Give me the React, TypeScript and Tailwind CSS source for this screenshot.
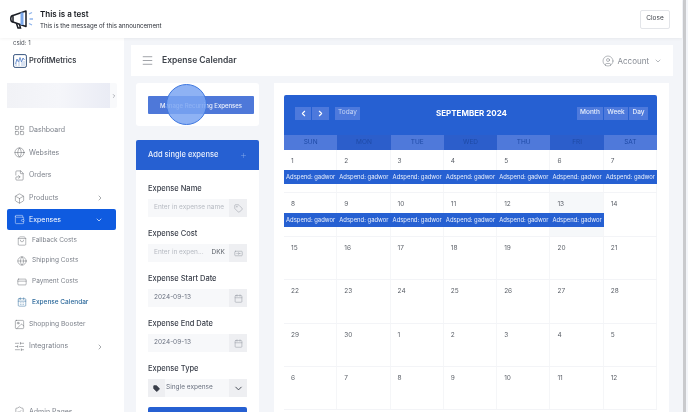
import {
  Box,
  CalendarDays,
  ChevronDown,
  ChevronLeft,
  ChevronRight,
  CircleUser,
  CreditCard,
  FileSymlink,
  Globe,
  Banknote,
  Image,
  LayoutGrid,
  Menu,
  Plus,
  ShieldCheck,
  ShoppingBag,
  SlidersHorizontal,
  Tag,
  Wallet,
  Calendar,
} from "lucide-react";

const mainNav = [
  { label: "Dashboard", icon: LayoutGrid },
  { label: "Websites", icon: Globe },
  { label: "Orders", icon: FileSymlink },
  { label: "Products", icon: Box, arrow: true },
];

const subNav = [
  { label: "Fallback Costs", icon: ShoppingBag },
  { label: "Shipping Costs", icon: Globe },
  { label: "Payment Costs", icon: CreditCard },
];

const days = ["SUN", "MON", "TUE", "WED", "THU", "FRI", "SAT"];

const weeks = [
  ["1", "2", "3", "4", "5", "6", "7"],
  ["8", "9", "10", "11", "12", "13", "14"],
  ["15", "16", "17", "18", "19", "20", "21"],
  ["22", "23", "24", "25", "26", "27", "28"],
  ["29", "30", "1", "2", "3", "4", "5"],
  ["6", "7", "8", "9", "10", "11", "12"],
];

function Field({
  label,
  value,
  placeholder,
  unit,
  icon: Icon,
}: {
  label: string;
  value?: string;
  placeholder?: string;
  unit?: string;
  icon: typeof Tag;
}) {
  return (
    <div className="h-[45px]">
      <div className="h-[17px] pt-[1px] text-[7.5px] leading-[12px] font-medium text-[#3a3f4a]">{label}</div>
      <div className="flex h-[18px] items-center bg-[#f7f8fa]">
        <span className={`flex-1 pl-[6px] text-[6.5px] ${value ? "text-[#6b7280]" : "text-[#b6bac2]"}`}>
          {value ?? placeholder}
        </span>
        {unit && <span className="pr-[4px] text-[6.5px] text-[#5b6068]">{unit}</span>}
        <span className="flex h-[18px] w-[18px] items-center justify-center bg-[#eeeff2] text-[#9ca1a9]">
          <Icon size={9} strokeWidth={1.5} />
        </span>
      </div>
    </div>
  );
}

export default function App() {
  return (
    <div className="flex h-[412px] w-[688px] overflow-hidden bg-white font-['Inter',sans-serif] blur-[0.35px]">
      <div className="flex min-w-0 flex-1 flex-col">
        {/* Announcement */}
        <div className="relative z-10 flex h-[38px] shrink-0 items-center bg-white pr-[12px] pl-[9px] shadow-[0_1px_3px_rgba(0,0,0,0.05)]">
          <svg width="25" height="20" viewBox="0 0 25 20" fill="none" className="mr-[6px]">
            <path d="M4 6.5 L17 2 V17.5 L4 13 Z" fill="#fff" stroke="#1a1d24" strokeWidth="1.5" strokeLinejoin="round" />
            <path d="M4 6.5 C1 6.5 1 13 4 13" stroke="#1a1d24" strokeWidth="1.5" />
            <path d="M7.5 14.5 L9 19 H11.5 L10.5 15.5" stroke="#1a1d24" strokeWidth="1.5" />
            <path d="M13 3.5 V16" stroke="#7aa7ea" strokeWidth="3" />
            <path d="M20 5 L23 3.5 M20.5 10 H24 M20 14.5 L23 16" stroke="#8fb4ec" strokeWidth="1.3" />
          </svg>
          <div className="flex-1">
            <div className="text-[8px] leading-[12px] font-semibold text-[#15181e]">This is a test</div>
            <div className="mt-[1px] text-[6.1px] leading-[10px] text-[#2a2e36]">This is the message of this announcement</div>
          </div>
          <button className="h-[19px] w-[30px] rounded-[2px] border border-[#e3e5e9] bg-white text-[6.5px] text-[#3c4048]">
            Close
          </button>
        </div>

        <div className="flex min-h-0 flex-1">
          {/* Sidebar */}
          <aside className="flex w-[124px] shrink-0 flex-col bg-white">
            <div className="shrink-0 pt-[1px] pl-[13px] text-[6px] leading-[8px] text-[#4b5058]">csid: 1</div>
            <div className="mt-[6px] flex h-[16px] shrink-0 items-center gap-[2px] pl-[13px]">
              <svg width="14" height="14" viewBox="0 0 14 14" fill="none">
                <rect x="0.6" y="0.6" width="12.8" height="12.8" rx="1.5" stroke="#38557f" strokeWidth="1" />
                <path d="M2.5 10 L4 5 L5.5 8 L7 3.5 L8.5 8 L10 4 L11.5 6" stroke="#5b84c9" strokeWidth="0.9" />
                <path d="M3 12 V9 M6 12 V7 M9 12 V8 M11 12 V7" stroke="#9cb5dc" strokeWidth="0.8" />
              </svg>
              <span className="text-[7.5px] font-semibold text-[#3c4048]">ProfitMetrics</span>
            </div>
            <div className="mt-[14px] ml-[7px] flex h-[25px] w-[110px] shrink-0 items-center rounded-[2px] bg-[#f8f9fb] text-[#6a6f78]">
              <div className="h-full flex-1 bg-gradient-to-r from-[#f1f2f6] via-[#f5f6fa] to-[#eaecf5]" />
              <ChevronRight size={6} strokeWidth={2} className="mx-[0.5px]" />
            </div>

            <nav className="mt-[11px] shrink-0 text-[7px] text-[#7d828b]">
              {mainNav.map((item) => (
                <div key={item.label} className="flex h-[22.6px] items-center pr-[20px] pl-[14px]">
                  <item.icon size={11} strokeWidth={1} className="mr-[4px] text-[#53585f]" />
                  <span className="flex-1">{item.label}</span>
                  {item.arrow && <ChevronRight size={8} strokeWidth={1.5} className="text-[#53585f]" />}
                </div>
              ))}
              <div className="ml-[7px] flex h-[21px] w-[109px] items-center rounded-[2px] bg-[#0f5be0] pr-[13px] pl-[7px] text-white">
                <Wallet size={11} strokeWidth={1} className="mr-[4px]" />
                <span className="flex-1">Expenses</span>
                <ChevronDown size={8} strokeWidth={2} />
              </div>
              {subNav.map((item) => (
                <div key={item.label} className="flex h-[20.6px] items-center pl-[17px] text-[6.5px]">
                  <item.icon size={10} strokeWidth={1} className="mr-[5px] text-[#53585f]" />
                  <span>{item.label}</span>
                </div>
              ))}
              <div className="flex h-[20.6px] items-center pl-[17px] text-[6.5px] font-medium text-[#2d6a9c]">
                <CalendarDays size={10} strokeWidth={1.2} className="mr-[5px]" />
                <span>Expense Calendar</span>
              </div>
              <div className="flex h-[22.6px] items-center pl-[14px] text-[6.7px]">
                <Image size={11} strokeWidth={1} className="mr-[4px] text-[#53585f]" />
                <span>Shopping Booster</span>
              </div>
              <div className="flex h-[22.6px] items-center pr-[20px] pl-[14px]">
                <SlidersHorizontal size={11} strokeWidth={1} className="mr-[4px] text-[#53585f]" />
                <span className="flex-1">Integrations</span>
                <ChevronRight size={8} strokeWidth={1.5} className="text-[#53585f]" />
              </div>
              <div className="mt-[43px] flex h-[22px] items-center pl-[14px]">
                <ShieldCheck size={11} strokeWidth={1} className="mr-[4px] text-[#53585f]" />
                <span>Admin Pages</span>
              </div>
            </nav>
          </aside>

          {/* Main */}
          <main className="flex min-w-0 flex-1 flex-col overflow-hidden bg-[#f3f5f9] pt-[7px] pr-[9px] pl-[7px]">
            <div className="flex h-[31px] shrink-0 items-center bg-white pr-[11px] pl-[10px]">
              <Menu size={13} strokeWidth={1.2} className="mr-[8px] text-[#6f747c]" />
              <span className="flex-1 text-[8.5px] font-semibold text-[#3e434b]">Expense Calendar</span>
              <CircleUser size={12} strokeWidth={1} className="mr-[3px] text-[#6f747c]" />
              <span className="mr-[5px] text-[8px] text-[#858a92]">Account</span>
              <ChevronDown size={8} strokeWidth={1.5} className="text-[#6f747c]" />
            </div>

            <div className="mt-[7px] flex min-h-0 flex-1 gap-[15px] pl-[5px]">
              {/* Left column */}
              <div className="w-[123px] shrink-0">
                <div className="relative h-[43px] rounded-[3px] bg-white pt-[13px] pl-[12px]">
                  <button className="block h-[18px] w-[106px] rounded-[1px] bg-[#4e78d9] text-[6px] font-medium text-[#eef2fb]">
                    Manage Recurring Expenses
                  </button>
                  <div className="absolute top-[1px] left-[30px] h-[41px] w-[41px] rounded-full border-[1.5px] border-[#3f78e0] bg-[#7aa5f2]/85" />
                </div>
                <div className="mt-[14px] flex h-[30px] items-center justify-between rounded-t-[2px] bg-[#2660d2] px-[12px] text-[7.5px] font-medium text-[#e8eefb]">
                  <span>Add single expense</span>
                  <Plus size={7} strokeWidth={1.5} className="text-[#8fb0ec]" />
                </div>
                <div className="h-[250px] bg-white px-[12px] pt-[12px]">
                  <Field label="Expense Name" placeholder="Enter in expense name" icon={Tag} />
                  <Field label="Expense Cost" placeholder="Enter in expen..." unit="DKK" icon={Banknote} />
                  <Field label="Expense Start Date" value="2024-09-13" icon={Calendar} />
                  <Field label="Expense End Date" value="2024-09-13" icon={Calendar} />
                  <div className="h-[45px]">
                    <div className="h-[17px] pt-[1px] text-[7.5px] leading-[12px] font-medium text-[#3a3f4a]">Expense Type</div>
                    <div className="flex h-[18px] items-center bg-[#f7f8fa]">
                      <span className="flex h-[18px] w-[17px] items-center justify-center bg-[#eeeff2] text-[#3a3f4a]">
                        <Tag size={7} fill="currentColor" />
                      </span>
                      <span className="flex-1 pl-[1px] text-[6.5px] text-[#6b7280]">Single expense</span>
                      <span className="flex h-[18px] w-[18px] items-center justify-center bg-[#eeeff2] text-[#3a3f4a]">
                        <ChevronDown size={11} strokeWidth={2} />
                      </span>
                    </div>
                  </div>
                  <div className="h-[20px] rounded-t-[2px] bg-[#2660d2]" />
                </div>
              </div>

              {/* Calendar */}
              <div className="w-[395px] shrink-0 bg-white pt-[12px] pr-[12px] pl-[10px]">
                <div className="flex h-[40px] items-center justify-between rounded-t-[2px] bg-[#2660d2] pr-[9px] pb-[4px] pl-[11px]">
                  <div className="flex w-[71px] items-center gap-[1px]">
                    <span className="flex h-[13px] w-[16px] items-center justify-center bg-[#4d79dc] text-white">
                      <ChevronLeft size={9} strokeWidth={3} />
                    </span>
                    <span className="flex h-[13px] w-[17px] items-center justify-center bg-[#4d79dc] text-white">
                      <ChevronRight size={9} strokeWidth={3} />
                    </span>
                    <span className="ml-[5px] flex h-[13px] w-[25px] items-center justify-center bg-[#4d79dc] text-[6.5px] text-[#c9d7f5]">
                      Today
                    </span>
                  </div>
                  <span className="text-[8px] font-bold text-white">SEPTEMBER 2024</span>
                  <div className="flex gap-[1px] text-[6.5px] font-medium text-[#eaf0fc]">
                    <span className="flex h-[13px] w-[26px] items-center justify-center bg-[#4d79dc]">Month</span>
                    <span className="flex h-[13px] w-[24px] items-center justify-center bg-[#4d79dc]">Week</span>
                    <span className="flex h-[13px] w-[19px] items-center justify-center bg-[#4d79dc]">Day</span>
                  </div>
                </div>
                <div className="grid grid-cols-7">
                  {days.map((day, i) => (
                    <div
                      key={day}
                      className={`flex h-[15px] items-center justify-center text-[6.5px] text-[#1e4aa6] ${
                        i % 2 === 0 ? "bg-[#4f79da]" : "bg-[#2c5ecb]"
                      }`}
                    >
                      {day}
                    </div>
                  ))}
                </div>
                {weeks.map((week, w) => (
                  <div key={w} className="grid h-[43.4px] grid-cols-7 border-b border-[#f3f4f7]">
                    {week.map((date, d) => {
                      const hasEvent = w === 0 || (w === 1 && d < 6);
                      return (
                        <div
                          key={date + d}
                          className={`border-r border-[#f5f6f8] pt-[7px] ${w === 1 && d === 5 ? "bg-[#f6f8fa]" : ""}`}
                        >
                          <div className="h-[13px] pl-[7px] text-[6.5px] leading-[8px] text-[#5a5f67]">{date}</div>
                          {hasEvent && (
                            <div className="-mr-[1px] flex h-[14px] items-center bg-[#2660d2] pl-[2px] text-[5.9px] whitespace-nowrap text-[#e8eefb]">
                              Adspend: gadwor
                            </div>
                          )}
                        </div>
                      );
                    })}
                  </div>
                ))}
              </div>
            </div>
          </main>
        </div>
      </div>

      {/* Scrollbar */}
      <div className="w-[6px] shrink-0 bg-[#f3f5f9]">
        <div className="ml-[1px] h-full w-[3px] bg-[#c9cacd]" />
      </div>
    </div>
  );
}
